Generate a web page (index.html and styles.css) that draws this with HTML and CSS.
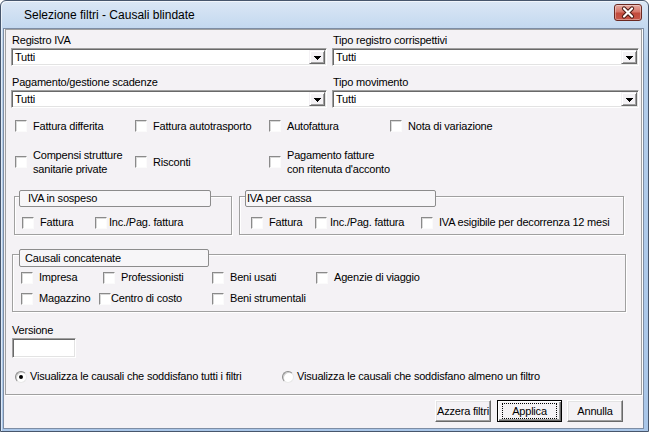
FILE: index.html
```html
<!DOCTYPE html>
<html lang="it">
<head>
<meta charset="utf-8">
<title>Selezione filtri - Causali blindate</title>
<link rel="stylesheet" href="styles.css">
</head>
<body>
<div class="window">
  <div class="titlebar">
    <span class="title">Selezione filtri - Causali blindate</span>
    <span class="close">
      <svg width="28" height="17" viewBox="0 0 28 17">
        <path d="M10 4.5 L18 12.5 M18 4.5 L10 12.5" stroke="#4a1a14" stroke-width="4.2" stroke-linecap="round"/>
        <path d="M10 4.5 L18 12.5 M18 4.5 L10 12.5" stroke="#ffffff" stroke-width="2.2" stroke-linecap="round"/>
      </svg>
    </span>
  </div>
  <div class="client">
    <div class="panel">
      <div class="combos">
        <div class="field">
          <div class="lbl">Registro IVA</div>
          <div class="combo"><span class="val">Tutti</span><span class="drop"><svg width="7" height="4" viewBox="0 0 7 4"><path d="M0 0h7v1H0z M1 1h5v1H1z M2 2h3v1H2z M3 3h1v1H3z" fill="#000"/></svg></span></div>
        </div>
        <div class="field">
          <div class="lbl">Tipo registro corrispettivi</div>
          <div class="combo"><span class="val">Tutti</span><span class="drop"><svg width="7" height="4" viewBox="0 0 7 4"><path d="M0 0h7v1H0z M1 1h5v1H1z M2 2h3v1H2z M3 3h1v1H3z" fill="#000"/></svg></span></div>
        </div>
        <div class="field">
          <div class="lbl">Pagamento/gestione scadenze</div>
          <div class="combo"><span class="val">Tutti</span><span class="drop"><svg width="7" height="4" viewBox="0 0 7 4"><path d="M0 0h7v1H0z M1 1h5v1H1z M2 2h3v1H2z M3 3h1v1H3z" fill="#000"/></svg></span></div>
        </div>
        <div class="field">
          <div class="lbl">Tipo movimento</div>
          <div class="combo"><span class="val">Tutti</span><span class="drop"><svg width="7" height="4" viewBox="0 0 7 4"><path d="M0 0h7v1H0z M1 1h5v1H1z M2 2h3v1H2z M3 3h1v1H3z" fill="#000"/></svg></span></div>
        </div>
      </div>

      <div class="cb-row row-a">
        <div class="cb w120"><span class="box"></span><span class="txt">Fattura differita</span></div>
        <div class="cb w134"><span class="box"></span><span class="txt">Fattura autotrasporto</span></div>
        <div class="cb w121"><span class="box"></span><span class="txt">Autofattura</span></div>
        <div class="cb"><span class="box"></span><span class="txt">Nota di variazione</span></div>
      </div>

      <div class="cb-row row-b">
        <div class="cb w120"><span class="box"></span><span class="txt two">Compensi strutture<br>sanitarie private</span></div>
        <div class="cb w134"><span class="box"></span><span class="txt">Risconti</span></div>
        <div class="cb"><span class="box"></span><span class="txt two">Pagamento fatture<br>con ritenuta d'acconto</span></div>
      </div>

      <div class="groups">
        <div class="group g-sospeso">
          <div class="legend leg-sospeso">IVA in sospeso</div>
          <div class="cb-row in-group">
            <div class="cb w73"><span class="box"></span><span class="txt">Fattura</span></div>
            <div class="cb tight2"><span class="box"></span><span class="txt">Inc./Pag. fattura</span></div>
          </div>
        </div>
        <div class="group g-cassa">
          <div class="legend leg-cassa">IVA per cassa</div>
          <div class="cb-row in-group">
            <div class="cb w64"><span class="box"></span><span class="txt">Fattura</span></div>
            <div class="cb w106 tight3"><span class="box"></span><span class="txt">Inc./Pag. fattura</span></div>
            <div class="cb"><span class="box"></span><span class="txt">IVA esigibile per decorrenza 12 mesi</span></div>
          </div>
        </div>
      </div>

      <div class="group g-causali">
        <div class="legend leg-causali">Causali concatenate</div>
        <div class="cb-row causali-1">
          <div class="cb w82"><span class="box"></span><span class="txt">Impresa</span></div>
          <div class="cb w109"><span class="box"></span><span class="txt">Professionisti</span></div>
          <div class="cb w104"><span class="box"></span><span class="txt">Beni usati</span></div>
          <div class="cb"><span class="box"></span><span class="txt">Agenzie di viaggio</span></div>
        </div>
        <div class="cb-row causali-2">
          <div class="cb w78"><span class="box"></span><span class="txt">Magazzino</span></div>
          <div class="cb w113 tight0"><span class="box"></span><span class="txt">Centro di costo</span></div>
          <div class="cb"><span class="box"></span><span class="txt">Beni strumentali</span></div>
        </div>
      </div>

      <div class="versione">
        <div class="lbl-v">Versione</div>
        <div class="edit"></div>
      </div>

      <div class="radios">
        <div class="rb rb-first"><span class="radio on"></span><span class="txt">Visualizza le causali che soddisfano tutti i filtri</span></div>
        <div class="rb"><span class="radio"></span><span class="txt">Visualizza le causali che soddisfano almeno un filtro</span></div>
      </div>
    </div>

    <div class="buttons">
      <div class="btn btn-azzera">Azzera filtri</div>
      <div class="btn btn-default"><span class="focus">Applica</span></div>
      <div class="btn btn-annulla">Annulla</div>
    </div>
  </div>
</div>
</body>
</html>
```

FILE: styles.css
```css
* { box-sizing: border-box; }

html, body {
  margin: 0;
  padding: 0;
  background: #ffffff;
}

body {
  font-family: "Liberation Sans", Arial, sans-serif;
  font-size: 11px;
  letter-spacing: -0.2px;
  color: #000;
}

.window {
  width: 649px;
  height: 432px;
  border: 1px solid #47566c;
  border-radius: 6px 6px 0 0;
  background: linear-gradient(to bottom, #dbe7f5 0px, #c3d8ef 27px, #b3cdea 60px, #a9c6e8 100%);
  display: flex;
  flex-direction: column;
  box-shadow: inset 1px 1px 0 rgba(255,255,255,0.6);
}

.titlebar {
  height: 27px;
  flex: none;
  display: flex;
  align-items: center;
  padding-left: 23px;
  padding-right: 6px;
}

.title {
  flex: 1;
  font-size: 12px;
  letter-spacing: 0;
  color: #000;
  padding-top: 0px;
}

.close {
  align-self: flex-start;
  margin-top: 3px;
  width: 28px;
  height: 17px;
  border: 1px solid #6b2820;
  border-radius: 3px;
  background: linear-gradient(to bottom, #e5a99f 0%, #d7776b 45%, #c24a3c 55%, #c8574a 100%);
  box-shadow: inset 0 0 0 1px rgba(255,255,255,0.35);
  display: flex;
  align-items: center;
  justify-content: center;
  overflow: hidden;
}
.close svg { display: block; margin: -1px; }

.client {
  flex: 1;
  margin: 0 4px 2px 2px;
  border: 1px solid #7d8da4;
  background: #f4f2f5;
  display: flex;
  flex-direction: column;
}

.panel {
  height: 366px;
  margin: 0 1px 0 1px;
  border: 1px solid #a0a0a0;
  box-shadow: 1px 1px 0 #fff;
  padding-top: 2px;
}

/* combos */
.combos {
  display: grid;
  grid-template-columns: 316px 307px;
  column-gap: 5px;
  row-gap: 8px;
  margin-left: 5px;
}

.lbl {
  height: 16px;
  line-height: 16px;
  padding-left: 1px;
}

.combo {
  height: 18px;
  background: #fff;
  border: 1px solid;
  border-color: #a0a0a0 #ffffff #ffffff #a0a0a0;
  box-shadow: inset 1px 1px 0 #696969, inset -1px -1px 0 #e3e3e3;
  display: flex;
  align-items: center;
  padding: 1px;
}

.val {
  flex: 1;
  padding-left: 2px;
  line-height: 14px;
}

.drop {
  width: 16px;
  height: 14px;
  background: #f4f2f5;
  border: 1px solid;
  border-color: #f4f2f5 #696969 #696969 #f4f2f5;
  box-shadow: inset 1px 1px 0 #fff, inset -1px -1px 0 #a0a0a0;
  display: flex;
  align-items: center;
  justify-content: center;
}
.drop svg { display: block; margin-top: 1px; }

/* checkboxes */
.cb-row {
  display: flex;
  align-items: center;
}

.row-a {
  margin-top: 11px;
  margin-left: 9px;
  height: 14px;
}

.row-b {
  margin-top: 15px;
  margin-left: 9px;
  height: 28px;
}

.cb {
  display: flex;
  align-items: center;
  flex: none;
  white-space: nowrap;
}

.box {
  width: 12px;
  height: 12px;
  flex: none;
  background: #fff;
  border: 1px solid;
  border-color: #8a8a8a #fbfbfb #fbfbfb #8a8a8a;
  box-shadow: inset 1px 1px 0 #d9d9d9;
  margin-right: 6px;
}

.txt { line-height: 13px; }
.txt.two { line-height: 14px; }

.tight0 .box { margin-right: 0; }
.tight2 .box { margin-right: 2px; }
.tight3 .box { margin-right: 3px; }

.w64 { width: 64px; }
.w73 { width: 73px; }
.w78 { width: 78px; }
.w82 { width: 82px; }
.w104 { width: 104px; }
.w106 { width: 106px; }
.w109 { width: 109px; }
.w113 { width: 113px; }
.w120 { width: 120px; }
.w121 { width: 121px; }
.w134 { width: 134px; }

/* group boxes */
.groups {
  display: flex;
  margin-top: 20px;
  margin-left: 8px;
  gap: 7px;
}

.group {
  border: 1px solid #a0a0a0;
  box-shadow: inset 1px 1px 0 #fff, 1px 1px 0 #fff;
}

.g-sospeso { width: 218px; height: 39px; }
.g-cassa { width: 385px; height: 39px; }

.legend {
  height: 17px;
  line-height: 15px;
  border: 1px solid #8c8c8c;
  border-radius: 2px;
  background: #f7f6f8;
  white-space: nowrap;
}

.leg-sospeso { width: 192px; margin: -7px 0 0 4px; padding-left: 8px; }
.leg-cassa { width: 191px; margin: -7px 0 0 5px; padding-left: 1px; }
.leg-causali { width: 190px; height: 18px; line-height: 16px; margin: -6px 0 0 6px; padding-left: 5px; }

.in-group {
  margin-top: 9px;
  height: 13px;
}
.g-sospeso .in-group { margin-left: 7px; }
.g-cassa .in-group { margin-left: 11px; }

.g-causali {
  margin-top: 19px;
  margin-left: 6px;
  width: 614px;
  height: 58px;
}

.causali-1 { margin-top: 4px; margin-left: 8px; height: 13px; }
.causali-2 { margin-top: 8px; margin-left: 8px; height: 13px; }

/* versione */
.versione { margin-top: 11px; margin-left: 6px; }
.lbl-v { height: 15px; line-height: 15px; }
.edit {
  width: 64px;
  height: 20px;
  background: #fff;
  border: 1px solid;
  border-color: #a0a0a0 #ffffff #ffffff #a0a0a0;
  box-shadow: inset 1px 1px 0 #696969, inset -1px -1px 0 #e3e3e3;
}

/* radios */
.radios {
  display: flex;
  margin-top: 12px;
  margin-left: 9px;
  height: 13px;
  align-items: center;
}
.rb { display: flex; align-items: center; white-space: nowrap; }
.rb-first { width: 267px; }
.radio {
  width: 12px;
  height: 12px;
  border-radius: 50%;
  border: 1px solid;
  border-color: #8a8a8a #e8e8e8 #e8e8e8 #8a8a8a;
  background: #fff;
  box-shadow: inset 1px 1px 0 #cfcfcf;
  margin-right: 3px;
  display: flex;
  align-items: center;
  justify-content: center;
  flex: none;
}
.radio.on::after {
  content: "";
  width: 4px;
  height: 4px;
  border-radius: 50%;
  background: #000;
}

/* buttons */
.buttons {
  display: flex;
  justify-content: flex-end;
  margin-top: 5px;
  padding-right: 20px;
}

.btn {
  height: 22px;
  width: 56px;
  display: flex;
  align-items: center;
  justify-content: center;
  background: #f4f2f5;
  border: 1px solid;
  border-color: #ffffff #696969 #696969 #ffffff;
  box-shadow: inset -1px -1px 0 #a0a0a0, inset 1px 1px 0 #e3e3e3;
  white-space: nowrap;
}

.btn-default {
  width: 65px;
  margin-left: 6px;
  margin-right: 5px;
  border: 1px solid #000;
  box-shadow: inset 1px 1px 0 #fff, inset -1px -1px 0 #696969, inset -2px -2px 0 #a0a0a0;
}

.focus {
  display: flex;
  align-items: center;
  justify-content: center;
  width: 55px;
  height: 16px;
  border: 1px dotted #000;
}
```
